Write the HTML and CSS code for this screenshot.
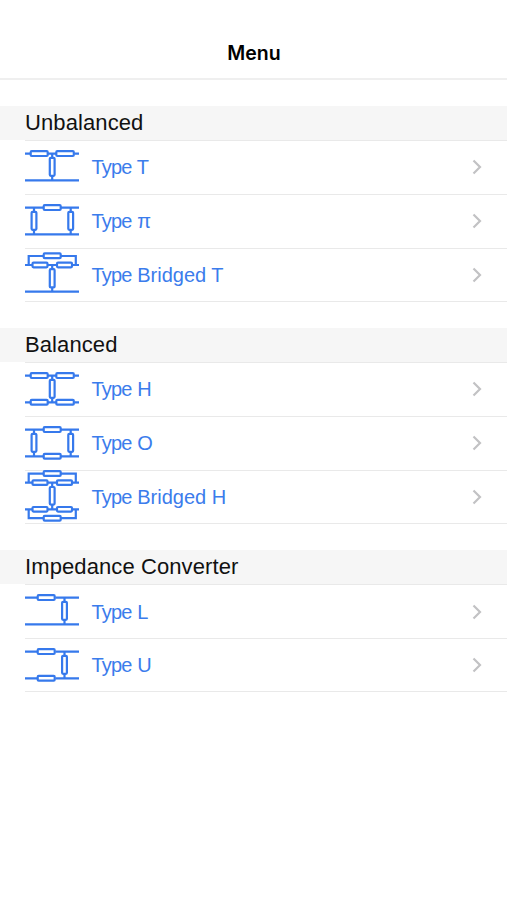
FILE: index.html
```
<!DOCTYPE html>
<html lang="en">
<head>
<meta charset="utf-8">
<title>Menu</title>
<link rel="stylesheet" href="styles.css">
</head>
<body>
<header class="navbar"><h1 class="title">Menu</h1></header>
<main>
  <section class="group">
    <h2 class="group-title">Unbalanced</h2>
    <a class="row"><svg class="icon" viewBox="0 0 54 54"><path d="M0 13.600H5M23 13.600H31M49.500 13.600H54M27.200 13.600V17M27.200 36V40.300M0 40.300H54"/><rect x="5.700" y="11.200" width="17" height="4.800" rx="1"/><rect x="31.300" y="11.200" width="17.500" height="4.800" rx="1"/><rect x="24.800" y="17.800" width="4.800" height="18" rx="1"/></svg><span class="label"><span class="word">Type</span> T</span><svg class="chevron" viewBox="0 0 10 16"><path d="M1.500 1.500L8 8L1.500 14.500"/></svg></a>
    <a class="row"><svg class="icon" viewBox="0 0 54 54"><path d="M0 13.600H18M36 13.600H54M0 40.300H54M9 13.600V18M9 36V40.300M45.700 13.600V18M45.700 36V40.300"/><rect x="18.700" y="11.200" width="17" height="4.800" rx="1"/><rect x="6.600" y="17.800" width="4.800" height="18" rx="1"/><rect x="43.300" y="17.800" width="4.800" height="18" rx="1"/></svg><span class="label"><span class="word">Type</span> π</span><svg class="chevron" viewBox="0 0 10 16"><path d="M1.500 1.500L8 8L1.500 14.500"/></svg></a>
    <a class="row"><svg class="icon" viewBox="0 0 54 54"><path d="M0 18H7M23 18H32M47.500 18H54M3.700 18V9H18M36 9H50.800V18M27.200 18V22M27.200 41V44.700M0 44.700H54"/><rect x="18.700" y="6.400" width="17" height="4.800" rx="1"/><rect x="7.500" y="15.700" width="15" height="4.600" rx="1"/><rect x="32" y="15.700" width="15" height="4.600" rx="1"/><rect x="24.800" y="22.200" width="4.800" height="18.200" rx="1"/></svg><span class="label"><span class="word">Type</span> Bridged T</span><svg class="chevron" viewBox="0 0 10 16"><path d="M1.500 1.500L8 8L1.500 14.500"/></svg></a>
  </section>
  <section class="group">
    <h2 class="group-title">Balanced</h2>
    <a class="row"><svg class="icon" viewBox="0 0 54 54"><path d="M0 13.600H5M23 13.600H31M49.500 13.600H54M0 40.300H5M23 40.300H31M49.500 40.300H54M27.200 13.600V17M27.200 36V40.300"/><rect x="5.700" y="11.200" width="17" height="4.800" rx="1"/><rect x="31.300" y="11.200" width="17.500" height="4.800" rx="1"/><rect x="5.700" y="37.900" width="17" height="4.800" rx="1"/><rect x="31.300" y="37.900" width="17.500" height="4.800" rx="1"/><rect x="24.800" y="17.800" width="4.800" height="18" rx="1"/></svg><span class="label"><span class="word">Type</span> H</span><svg class="chevron" viewBox="0 0 10 16"><path d="M1.500 1.500L8 8L1.500 14.500"/></svg></a>
    <a class="row"><svg class="icon" viewBox="0 0 54 54"><path d="M0 13.600H18M36 13.600H54M0 40.300H18M36 40.300H54M9 13.600V18M9 36V40.300M45.700 13.600V18M45.700 36V40.300"/><rect x="18.700" y="11.200" width="17" height="4.800" rx="1"/><rect x="18.700" y="37.900" width="17" height="4.800" rx="1"/><rect x="6.600" y="17.800" width="4.800" height="18" rx="1"/><rect x="43.300" y="17.800" width="4.800" height="18" rx="1"/></svg><span class="label"><span class="word">Type</span> O</span><svg class="chevron" viewBox="0 0 10 16"><path d="M1.500 1.500L8 8L1.500 14.500"/></svg></a>
    <a class="row"><svg class="icon" viewBox="0 0 54 54"><path d="M0 13.600H7M23 13.600H32M47.500 13.600H54M3.700 13.600V4.600H18M36 4.600H50.800V13.600M27.200 13.600V18M27.200 36V40.300M0 40.300H7M23 40.300H32M47.500 40.300H54M3.700 40.300V49.200H18M36 49.200H50.800V40.300"/><rect x="18.700" y="2.100" width="17" height="4.800" rx="1"/><rect x="7.500" y="11.300" width="15" height="4.600" rx="1"/><rect x="32" y="11.300" width="15" height="4.600" rx="1"/><rect x="24.800" y="18" width="4.800" height="17.600" rx="1"/><rect x="7.500" y="38" width="15" height="4.600" rx="1"/><rect x="32" y="38" width="15" height="4.600" rx="1"/><rect x="18.700" y="46.900" width="17" height="4.800" rx="1"/></svg><span class="label"><span class="word">Type</span> Bridged H</span><svg class="chevron" viewBox="0 0 10 16"><path d="M1.500 1.500L8 8L1.500 14.500"/></svg></a>
  </section>
  <section class="group">
    <h2 class="group-title">Impedance Converter</h2>
    <a class="row"><svg class="icon" viewBox="0 0 54 54"><path d="M0 13.600H12M30.500 13.600H54M0 40.300H54M39.500 13.600V18M39.500 36V40.300"/><rect x="12.700" y="11.200" width="17" height="4.800" rx="1"/><rect x="37.100" y="17.800" width="4.800" height="18" rx="1"/></svg><span class="label"><span class="word">Type</span> L</span><svg class="chevron" viewBox="0 0 10 16"><path d="M1.500 1.500L8 8L1.500 14.500"/></svg></a>
    <a class="row"><svg class="icon" viewBox="0 0 54 54"><path d="M0 13.600H12M30.500 13.600H54M0 40.300H12M30.500 40.300H54M39.500 13.600V18M39.500 36V40.300"/><rect x="12.700" y="11.200" width="17" height="4.800" rx="1"/><rect x="12.700" y="37.900" width="17" height="4.800" rx="1"/><rect x="37.100" y="17.800" width="4.800" height="18" rx="1"/></svg><span class="label"><span class="word">Type</span> U</span><svg class="chevron" viewBox="0 0 10 16"><path d="M1.500 1.500L8 8L1.500 14.500"/></svg></a>
  </section>
</main>
</body>
</html>
```
FILE: styles.css
```
* { box-sizing: border-box; }
body {
  margin: 0;
  min-height: 900px;
  background: #fff;
  color: #111;
  font-family: "Liberation Sans", Arial, sans-serif;
}
.navbar {
  height: 80px;
  padding-top: 27px;
  display: flex;
  align-items: center;
  justify-content: center;
  border-bottom: 2px solid #efefef;
}
.title {
  margin: 0;
  padding-left: 1px;
  font: 600 19.500px/24px Inter, sans-serif;
  color: #000;
}
.group { padding-top: 26px; }
.group-title {
  margin: 0;
  height: 34px;
  padding-left: 25px;
  background: #f6f6f6;
  font-size: 22px;
  font-weight: 400;
  line-height: 33px;
  letter-spacing: 0.100px;
}
.row {
  height: 53.800px;
  margin-left: 25px;
  padding-right: 25px;
  display: flex;
  align-items: center;
  border-top: 1px solid #e9e9e9;
  color: #3b7cec;
}
.row:last-child { height: 54.500px; border-bottom: 1px solid #e9e9e9; }
.icon {
  width: 54px;
  height: 54px;
  margin-top: -1px;
  flex: none;
  fill: none;
  stroke: #3679ec;
  stroke-width: 2.200;
}
.label { flex: 1; margin-left: 12.500px; font-size: 20px; line-height: 24px; }
.word { letter-spacing: -0.800px; }
.chevron {
  width: 10px;
  height: 16px;
  fill: none;
  stroke: #c2c2c4;
  stroke-width: 2.200;
}
```
